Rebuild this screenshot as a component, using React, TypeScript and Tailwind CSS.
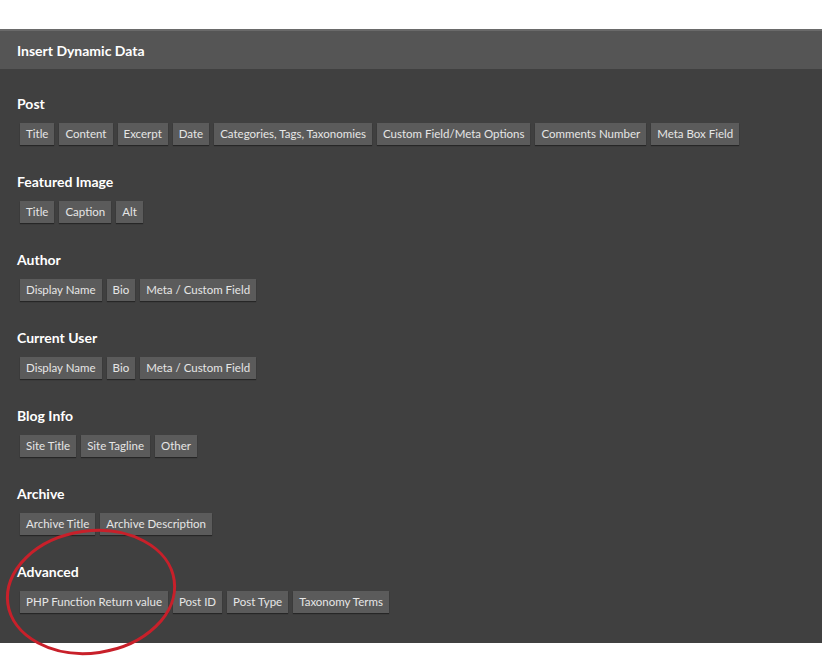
import React from "react";

const groups: [string, string[]][] = [
  ["Post", ["Title", "Content", "Excerpt", "Date", "Categories, Tags, Taxonomies", "Custom Field/Meta Options", "Comments Number", "Meta Box Field"]],
  ["Featured Image", ["Title", "Caption", "Alt"]],
  ["Author", ["Display Name", "Bio", "Meta / Custom Field"]],
  ["Current User", ["Display Name", "Bio", "Meta / Custom Field"]],
  ["Blog Info", ["Site Title", "Site Tagline", "Other"]],
  ["Archive", ["Archive Title", "Archive Description"]],
  ["Advanced", ["PHP Function Return value", "Post ID", "Post Type", "Taxonomy Terms"]],
];

export default function App() {
  return (
    <div className="w-[825px] h-[659px] bg-white relative overflow-hidden" style={{ fontFamily: "Lato, 'Open Sans', sans-serif" }}>
      <div className="absolute left-0 top-[29px] w-[822px] h-[614px] bg-[#404040] flex flex-col">
        <div className="h-[40px] shrink-0 bg-[#555555] border-t-2 border-[#6a6a6a] flex items-center px-[17px] text-[14px] font-bold text-white">Insert Dynamic Data</div>
        <div className="flex flex-col gap-[28px] pt-[26px] px-[17px]">
          {groups.map(([title, items]) => (
            <div key={title} className="flex flex-col gap-[10px]">
              <div className="text-[14px] font-bold text-white leading-[18px]">{title}</div>
              <div className="flex gap-[5px] pl-[3px]">
                {items.map((it) => (
                  <div key={it} className="h-[22px] px-[6px] bg-[#5b5b5b] text-[#e6e6e6] text-[11.5px] flex items-center shadow-[0_1px_1px_rgba(0,0,0,0.4)]">{it}</div>
                ))}
              </div>
            </div>
          ))}
        </div>
      </div>
      <svg className="absolute left-0 top-0 pointer-events-none" width="825" height="659">
        <ellipse cx="91" cy="592" rx="84" ry="61" fill="none" stroke="#c8202a" strokeWidth="3" transform="rotate(-8 91 592)" />
      </svg>
    </div>
  );
}
